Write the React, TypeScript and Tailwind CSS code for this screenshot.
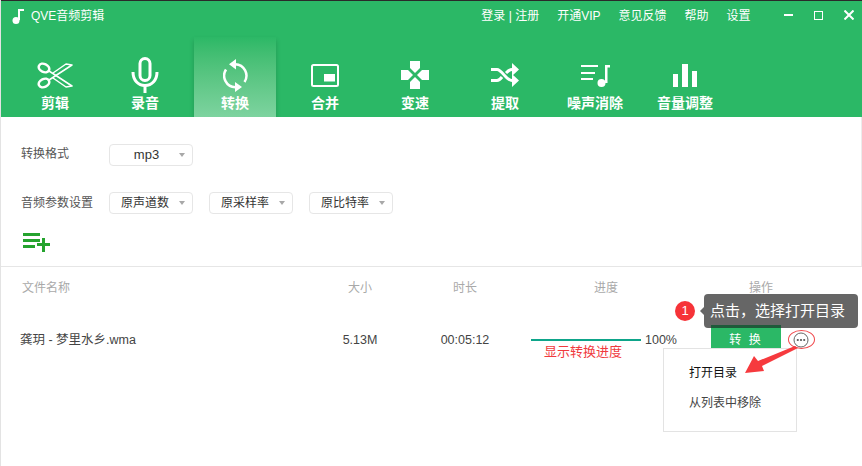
import type { ReactNode } from "react";

const font = "font-['Liberation_Sans','Noto_Sans_CJK_SC',sans-serif]";

function Scissors() {
  return (
    <svg width="36" height="27" viewBox="0 0 36 27" fill="none" stroke="white">
      <ellipse cx="7" cy="6" rx="5.500" ry="4" strokeWidth="2.500" transform="rotate(25 7 6)" />
      <ellipse cx="7" cy="21" rx="5.500" ry="4" strokeWidth="2.500" transform="rotate(-25 7 21)" />
      <path d="M12 9 L35 24 L29 25 L16 16" strokeWidth="1.500" strokeLinejoin="round" />
      <path d="M12 18 L35 3 L29 2 L16 11" strokeWidth="1.500" strokeLinejoin="round" />
    </svg>
  );
}

function Mic() {
  return (
    <svg width="28" height="36" viewBox="0 0 28 36" fill="none" stroke="white" strokeWidth="3">
      <rect x="9" y="1.500" width="10" height="22" rx="5" />
      <path d="M2 15 C2 23 7 28.500 14 28.500 C21 28.500 26 23 26 15" />
      <path d="M14 28 V36" />
    </svg>
  );
}

function Convert() {
  return (
    <svg width="25" height="33" viewBox="0 0 25 33" fill="none">
      <path d="M12.300 5.200 A11.500 11.500 0 0 1 21.500 23" stroke="white" strokeWidth="2.500" />
      <path d="M12.300 28.200 A11.500 11.500 0 0 1 3 10.500" stroke="white" strokeWidth="2.500" />
      <path d="M13 0 L6 5.200 L13 10.500 Z M12 23 L19 28 L12 33 Z" fill="white" />
    </svg>
  );
}

function Merge() {
  return (
    <svg width="28" height="23" viewBox="0 0 28 23" fill="none">
      <rect x="1" y="1" width="26" height="21" rx="1.500" stroke="white" strokeWidth="2" />
      <rect x="13" y="10" width="11" height="7.500" fill="white" />
    </svg>
  );
}

function Speed() {
  return (
    <svg width="28" height="28" viewBox="0 0 28 28" fill="white">
      <path d="M9 0 H19 V7 L14 12 L9 7 Z" />
      <path d="M9 28 H19 V21 L14 16 L9 21 Z" />
      <path d="M0 9 V19 H7 L12 14 L7 9 Z" />
      <path d="M28 9 V19 H21 L16 14 L21 9 Z" />
    </svg>
  );
}

function Extract() {
  return (
    <svg width="28" height="24" viewBox="0 0 28 24" fill="none">
      <path d="M0 6.500 H6 C11 6.500 15 17.500 21 17.500 H23" stroke="white" strokeWidth="3" />
      <path d="M0 17.500 H6 C8 17.500 9.500 16 11 14 M15 10 C17 8 19 6.500 21 6.500 H23" stroke="white" strokeWidth="3" />
      <path d="M21 0 L28 6.500 L21 13 Z M21 11 L28 17.500 L21 24 Z" fill="white" />
    </svg>
  );
}

function Denoise() {
  return (
    <svg width="29" height="24" viewBox="0 0 29 24" fill="white">
      <rect x="0" y="2" width="17" height="2" />
      <rect x="0" y="9" width="14" height="2" />
      <rect x="0" y="15" width="12" height="2" />
      <rect x="24" y="2" width="2.500" height="18" />
      <rect x="24" y="2" width="5" height="2.500" />
      <circle cx="20.500" cy="20" r="4" />
    </svg>
  );
}

function Volume() {
  return (
    <svg width="24" height="23" viewBox="0 0 24 23" fill="white">
      <rect x="0" y="10" width="5" height="13" />
      <rect x="9" y="0" width="6" height="23" />
      <rect x="19" y="7" width="5" height="16" />
    </svg>
  );
}

const tabs: { label: string; icon: ReactNode; active?: boolean }[] = [
  { label: "剪辑", icon: <Scissors /> },
  { label: "录音", icon: <Mic /> },
  { label: "转换", icon: <Convert />, active: true },
  { label: "合并", icon: <Merge /> },
  { label: "变速", icon: <Speed /> },
  { label: "提取", icon: <Extract /> },
  { label: "噪声消除", icon: <Denoise /> },
  { label: "音量调整", icon: <Volume /> },
];

function Select({ label, center }: { label: string; center?: boolean }) {
  return (
    <div className="flex h-[22px] w-[84px] items-center rounded-sm border border-[#e6e6e6] bg-white pr-[7px] text-[12px] text-[#333]">
      <span className={center ? "flex-1 pl-1 text-center text-[13px]" : "flex-1 pl-[11px]"}>{label}</span>
      <span className="h-0 w-0 border-x-[3px] border-t-[4px] border-x-transparent border-t-[#a8a8a8]" />
    </div>
  );
}

export default function App() {
  return (
    <div className={`${font} relative h-[466px] w-[862px] overflow-hidden border-l border-[#e3e3e3] bg-white text-[12px]`}>
      <header className="h-[117px] border-t border-[#2a2a2a] bg-[#2bb866] text-white">
        <div className="flex h-[30px] items-center pl-[11px]">
          <svg width="13" height="15" viewBox="0 0 13 15" fill="white">
            <circle cx="4" cy="11.500" r="3.500" />
            <rect x="6" y="0" width="2" height="11" />
            <rect x="6" y="0" width="6" height="2" />
          </svg>
          <span className="ml-[6px] text-[12px]">QVE音频剪辑</span>
          <nav className="ml-[377px] flex items-center gap-[18px]">
            <span>登录 | 注册</span>
            <span>开通VIP</span>
            <span>意见反馈</span>
            <span>帮助</span>
            <span>设置</span>
          </nav>
          <div className="mb-[2px] ml-[33px] flex items-center gap-[21px]">
            <span className="h-[2px] w-[9px] bg-white" />
            <span className="h-[9px] w-[9px] border border-white" />
            <svg width="10" height="10" viewBox="0 0 10 10" stroke="white" strokeWidth="2">
              <path d="M0.500 0.500 L9.500 9.500 M9.500 0.500 L0.500 9.500" />
            </svg>
          </div>
        </div>
        <div className="flex h-[86px] items-end gap-[8px] pl-[13px]">
          {tabs.map((t) => (
            <div
              key={t.label}
              className={`flex h-[80px] w-[82px] flex-col items-center justify-end pb-[4px] ${
                t.active
                  ? "bg-gradient-to-b from-[#2bb866] to-[#7dd39f] shadow-[0_3px_5px_rgba(0,0,0,0.18)]"
                  : ""
              }`}
            >
              <div className="flex h-[36px] items-center justify-center">{t.icon}</div>
              <span className="text-[14px] leading-[20px] font-bold">{t.label}</span>
            </div>
          ))}
        </div>
      </header>

      <section className="relative border-r border-[#ececec] bg-white px-[20px] pt-[27px] pb-[13px] text-[#555]">
        <div className="flex items-center">
          <span className="w-[88px] pb-[3px]">转换格式</span>
          <Select label="mp3" center />
        </div>
        <div className="mt-[26px] flex items-center">
          <span className="w-[88px]">音频参数设置</span>
          <div className="flex gap-[16px]">
            <Select label="原声道数" />
            <Select label="原采样率" />
            <Select label="原比特率" />
          </div>
        </div>
        <svg className="mt-[19px] ml-[2px]" width="28" height="20" viewBox="0 0 28 20" fill="#25a32e">
          <rect x="0" y="0" width="17" height="3" />
          <rect x="0" y="6" width="17" height="3" />
          <rect x="0" y="12" width="12" height="3" />
          <rect x="14" y="10" width="13" height="3" />
          <rect x="19" y="5" width="3" height="14" />
        </svg>
      </section>

      <div className="border-t border-[#e6e6e6]">
        <div className="grid grid-cols-[300px_80px_130px_150px_160px] pt-[12px] pl-[20px] text-[12px] leading-[18px] text-[#a9a9a9]">
          <span className="pl-[1px]">文件名称</span>
          <span className="-ml-[2px] text-center">大小</span>
          <span className="-ml-[2px] text-center">时长</span>
          <span className="text-center">进度</span>
          <span className="text-center">操作</span>
        </div>
        <div className="mt-[31px] grid h-[24px] grid-cols-[300px_80px_130px_150px_160px] items-center pl-[19px] text-[12.500px] text-[#444]">
          <span>龚玥 - 梦里水乡.wma</span>
          <span className="text-center">5.13M</span>
          <span className="text-center">00:05:12</span>
          <div className="flex items-center pl-[1px]">
            <span className="h-[2px] w-[110px] bg-[#0ea58a]" />
            <span className="ml-[4px]">100%</span>
          </div>
          <div className="flex items-center pl-[31px]">
            <button className="h-[24px] w-[70px] bg-[#2bb866] text-[12px] tracking-[2px] text-white">转 换</button>
            <svg className="ml-[12px]" width="16" height="16" viewBox="0 0 16 16" fill="none">
              <circle cx="8" cy="8" r="7" stroke="#666" />
              <circle cx="4.800" cy="8" r="1.100" fill="#555" />
              <circle cx="8" cy="8" r="1.100" fill="#555" />
              <circle cx="11.200" cy="8" r="1.100" fill="#555" />
            </svg>
          </div>
        </div>
        <div className="-mt-[8px] pl-[543px] text-[13px] leading-[16px] text-[#f03a3e]">显示转换进度</div>
      </div>

      {/* annotations on top of the list */}
      <div className="absolute top-[301px] left-[674px] flex h-[20px] w-[20px] items-center justify-center rounded-full bg-[#f63338] text-[13px] text-white">
        1
      </div>
      <div className="absolute top-[294px] left-[703px] flex h-[34px] w-[154px] items-center rounded bg-[#666] pl-[6px] text-[15px] text-white">
        点击，选择打开目录
      </div>
      <span className="absolute top-[306px] left-[699px] h-0 w-0 border-y-[5px] border-r-[5px] border-y-transparent border-r-[#666]" />
      <span className="absolute top-[325px] left-[710px] h-[3px] w-[70px] bg-[#1f5a3a]" />
      <span className="absolute top-[330px] left-[787px] h-[19px] w-[27px] rounded-[50%] border border-[#f0484c]" />

      <div className="absolute top-[348px] left-[662px] h-[84px] w-[134px] border border-[#e3e3e3] bg-white pt-[15px] pl-[25px] text-[12px] leading-[18px]">
        <div className="text-[#111]">打开目录</div>
        <div className="mt-[12px] text-[#444]">从列表中移除</div>
      </div>
      <svg className="absolute top-[346px] left-[743px]" width="56" height="30" viewBox="0 0 56 30" fill="#f63a3e">
        <path d="M51 0 L54 2 L18 20 L20 25 L1 27 L10 10 L14 15 Z" />
      </svg>
    </div>
  );
}
